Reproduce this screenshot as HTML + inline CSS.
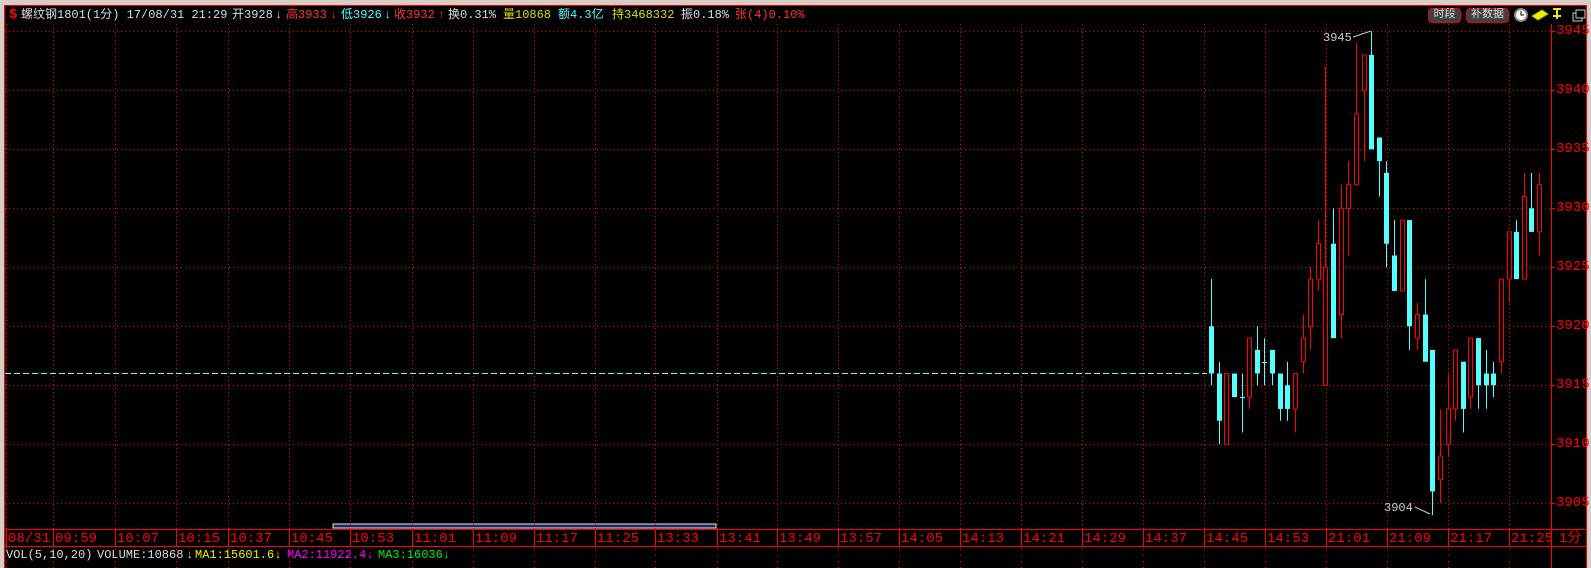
<!DOCTYPE html>
<html><head><meta charset="utf-8">
<style>
html,body{margin:0;padding:0;background:#000;}
#w{position:relative;width:1591px;height:568px;overflow:hidden;background:#000;font-family:"Liberation Mono","WenQuanYi Zen Hei","Noto Sans CJK SC",monospace;}
.t{position:absolute;font-size:12px;line-height:14px;white-space:pre;}
.btn{position:absolute;top:8px;height:13px;border:1px solid #e00;border-radius:4px;background:#404040;color:#ddd;font-size:11px;line-height:13px;text-align:center;}
.ax{position:absolute;color:#f00;font-size:14px;line-height:14px;white-space:pre;}
</style></head><body><div id="w">
<svg id="s" width="1591" height="568" style="position:absolute;left:0;top:0">
<rect x="0" y="0" width="1591" height="5" fill="#d4d0c8"/>
<rect x="0" y="0" width="4" height="568" fill="#d4d0c8"/>
<rect x="1587" y="0" width="4" height="568" fill="#d4d0c8"/>
<line x1="4" y1="5.5" x2="1587" y2="5.5" stroke="#f00"/>
<line x1="4.5" y1="5" x2="4.5" y2="568" stroke="#f00"/>
<line x1="1586.5" y1="5" x2="1586.5" y2="568" stroke="#f00"/>
<line x1="1551.5" y1="24" x2="1551.5" y2="568" stroke="#f00"/>
<line x1="5" y1="529.5" x2="1586" y2="529.5" stroke="#f00"/>
<line x1="5" y1="546.5" x2="1586" y2="546.5" stroke="#f00"/>
<rect x="333" y="524" width="383" height="4" fill="#1a2a5a" stroke="#e8e8e8" stroke-width="1"/>
<g id="g"></g>
</svg>
<div class="t" style="left:9px;top:8px;color:#f00;font-weight:bold;font-size:14px">$</div>
<div class="t" style="left:21px;top:8px;color:#ddd">螺纹钢1801(1分) 17/08/31 21:29</div>
<div class="t" style="left:232px;top:8px;color:#ddd">开3928</div>
<div class="t" style="left:275px;top:8px;color:#ddd">↓</div>
<div class="t" style="left:286px;top:8px;color:#f33">高3933</div>
<div class="t" style="left:330px;top:8px;color:#f33">↓</div>
<div class="t" style="left:341px;top:8px;color:#5ff">低3926</div>
<div class="t" style="left:384px;top:8px;color:#5ff">↓</div>
<div class="t" style="left:394px;top:8px;color:#f33">收3932</div>
<div class="t" style="left:438px;top:8px;color:#f33">↑</div>
<div class="t" style="left:448px;top:8px;color:#ddd">换0.31%</div>
<div class="t" style="left:503px;top:8px;color:#dd0">量10868</div>
<div class="t" style="left:558px;top:8px;color:#5ff">额4.3亿</div>
<div class="t" style="left:612px;top:8px;color:#dd0">持3468332</div>
<div class="t" style="left:681px;top:8px;color:#ddd">振0.18%</div>
<div class="t" style="left:735px;top:8px;color:#f33">张(4)0.10%</div>
<div class="btn" style="left:1428px;width:31px">时段</div>
<div class="btn" style="left:1466px;width:41px">补数据</div>
<svg width="80" height="20" style="position:absolute;left:1512px;top:6px">
<circle cx="9" cy="9" r="6" fill="#fff" stroke="#888" stroke-width="2"/><path d="M9 5v4h3" stroke="#000" fill="none"/>
<path d="M20 10l10-6 6 4-10 6z" fill="#ee0" stroke="#aa0"/>
<path d="M41 3h8M45 3v10M41 10h8" stroke="#ee0" stroke-width="2"/>
<rect x="61" y="7" width="9" height="8" fill="none" stroke="#ccc"/><rect x="64" y="4" width="9" height="8" fill="#000" stroke="#ccc"/>
</svg>
<div class="t" style="left:6px;top:548px;color:#ddd">VOL(5,10,20)</div>
<div class="t" style="left:97px;top:548px;color:#ddd">VOLUME:10868</div>
<div class="t" style="left:186px;top:548px;color:#ddd">↓</div>
<div class="t" style="left:195px;top:548px;color:#ee0">MA1:15601.6↓</div>
<div class="t" style="left:287px;top:548px;color:#f0f">MA2:11922.4↓</div>
<div class="t" style="left:378px;top:548px;color:#0e0">MA3:16036↓</div>
<div class="t" style="left:1323px;top:31px;color:#ccc">3945</div>
<div class="t" style="left:1384px;top:501px;color:#ccc">3904</div>
<div id="lbl"></div>
</div>
<script>
var g=document.getElementById('g'),h='';
function y(p){return 31.3+(3945-p)*11.8;}
var rows=[3945,3940,3935,3930,3925,3920,3915,3910,3905];
rows.forEach(function(p){var yy=Math.round(y(p))+0.5;h+='<line x1="5" y1="'+yy+'" x2="1551" y2="'+yy+'" stroke="#f00" stroke-dasharray="1,3"/>';h+='<line x1="1551" y1="'+yy+'" x2="1555" y2="'+yy+'" stroke="#f00"/>';});
var ticks=[[6,'08/31'],[53,'09:59'],[115,'10:07'],[176,'10:15'],[228,'10:37'],[289,'10:45'],[350,'10:53'],[412,'11:01'],[473,'11:09'],[534,'11:17'],[595,'11:25'],[655,'13:33'],[717,'13:41']];
var nm=['13:49','13:57','14:05','14:13','14:21','14:29','14:37','14:45','14:53','21:01','21:09','21:17','21:25'];
for(var k=0;k<nm.length;k++)ticks.push([Math.round(1204-(7-k)*61.03),nm[k]]);
var lb='';
ticks.forEach(function(t){var x=t[0]+0.5;h+='<line x1="'+x+'" y1="24" x2="'+x+'" y2="529" stroke="#f00" stroke-dasharray="1,3"/>';h+='<line x1="'+x+'" y1="529" x2="'+x+'" y2="547" stroke="#f00"/>';h+='<line x1="'+x+'" y1="549" x2="'+x+'" y2="568" stroke="#f00" stroke-dasharray="1,5"/>';lb+='<div class="ax" style="left:'+(t[0]+2)+'px;top:532px">'+t[1]+'</div>';});
lb+='<div class="ax" style="left:1559px;top:532px">1分</div>';
rows.forEach(function(p){lb+='<div class="ax" style="left:1556px;top:'+(Math.round(y(p))-7)+'px">'+p+'</div>';});
document.getElementById('lbl').innerHTML=lb;
h+='<line x1="5" y1="373.5" x2="1207" y2="373.5" stroke="#5ff" stroke-dasharray="6,3"/>';
var d=[[3920,3916,3924,3915],[3916,3912,3917,3910],[3910,3916,3916,3910],[3916,3914,3916,3914],[3914,3914,3916,3911],[3914,3919,3919,3913],[3918,3916,3920,3915],[3917,3917,3919,3915],[3918,3916,3918,3915],[3916,3913,3916,3912],[3915,3913,3917,3912],[3913,3916,3916,3911],[3917,3919,3921,3916],[3920,3924,3925,3918],[3924,3927,3929,3923],[3915,3925,3942,3915],[3927,3919,3930,3919],[3921,3930,3932,3919],[3930,3932,3934,3926],[3932,3938,3944,3932],[3940,3943,3943,3934],[3943,3935,3945,3935],[3936,3934,3936,3931],[3933,3927,3934,3925],[3926,3923,3929,3923],[3923,3929,3929,3923],[3929,3920,3929,3918],[3919,3921,3922,3918],[3921,3917,3924,3917],[3918,3906,3918,3904],[3907,3909,3913,3905],[3910,3913,3916,3909],[3913,3918,3918,3912],[3917,3913,3917,3911],[3914,3919,3919,3913],[3919,3915,3919,3913],[3916,3915,3918,3913],[3916,3915,3917,3914],[3917,3924,3924,3916],[3924,3928,3928,3922],[3928,3924,3929,3924],[3924,3931,3933,3924],[3930,3928,3933,3928],[3928,3932,3933,3926]];
d.forEach(function(c,i){var x=Math.round(1211+7.63*i);var o=c[0],cl=c[1];var up=cl>o,col=up?'#f00':'#54ffff';
var top=y(Math.max(o,cl)),bot=y(Math.min(o,cl));
h+='<line x1="'+(x+0.5)+'" y1="'+y(c[2])+'" x2="'+(x+0.5)+'" y2="'+y(c[3])+'" stroke="'+col+'"/>';
if(o==cl){h+='<line x1="'+(x-2)+'" y1="'+(Math.round(top)+0.5)+'" x2="'+(x+3)+'" y2="'+(Math.round(top)+0.5)+'" stroke="'+col+'"/>';}
else if(up){h+='<rect x="'+(x-1.5)+'" y="'+top+'" width="4" height="'+(bot-top)+'" fill="#000" stroke="#f00"/>';}
else{h+='<rect x="'+(x-2)+'" y="'+top+'" width="5" height="'+(bot-top)+'" fill="#54ffff"/>';}
});
h+='<line x1="1353" y1="37" x2="1371" y2="31" stroke="#ccc"/><line x1="1415" y1="507" x2="1430" y2="514" stroke="#ccc"/>';
g.innerHTML=h;
</script>
</body></html>
